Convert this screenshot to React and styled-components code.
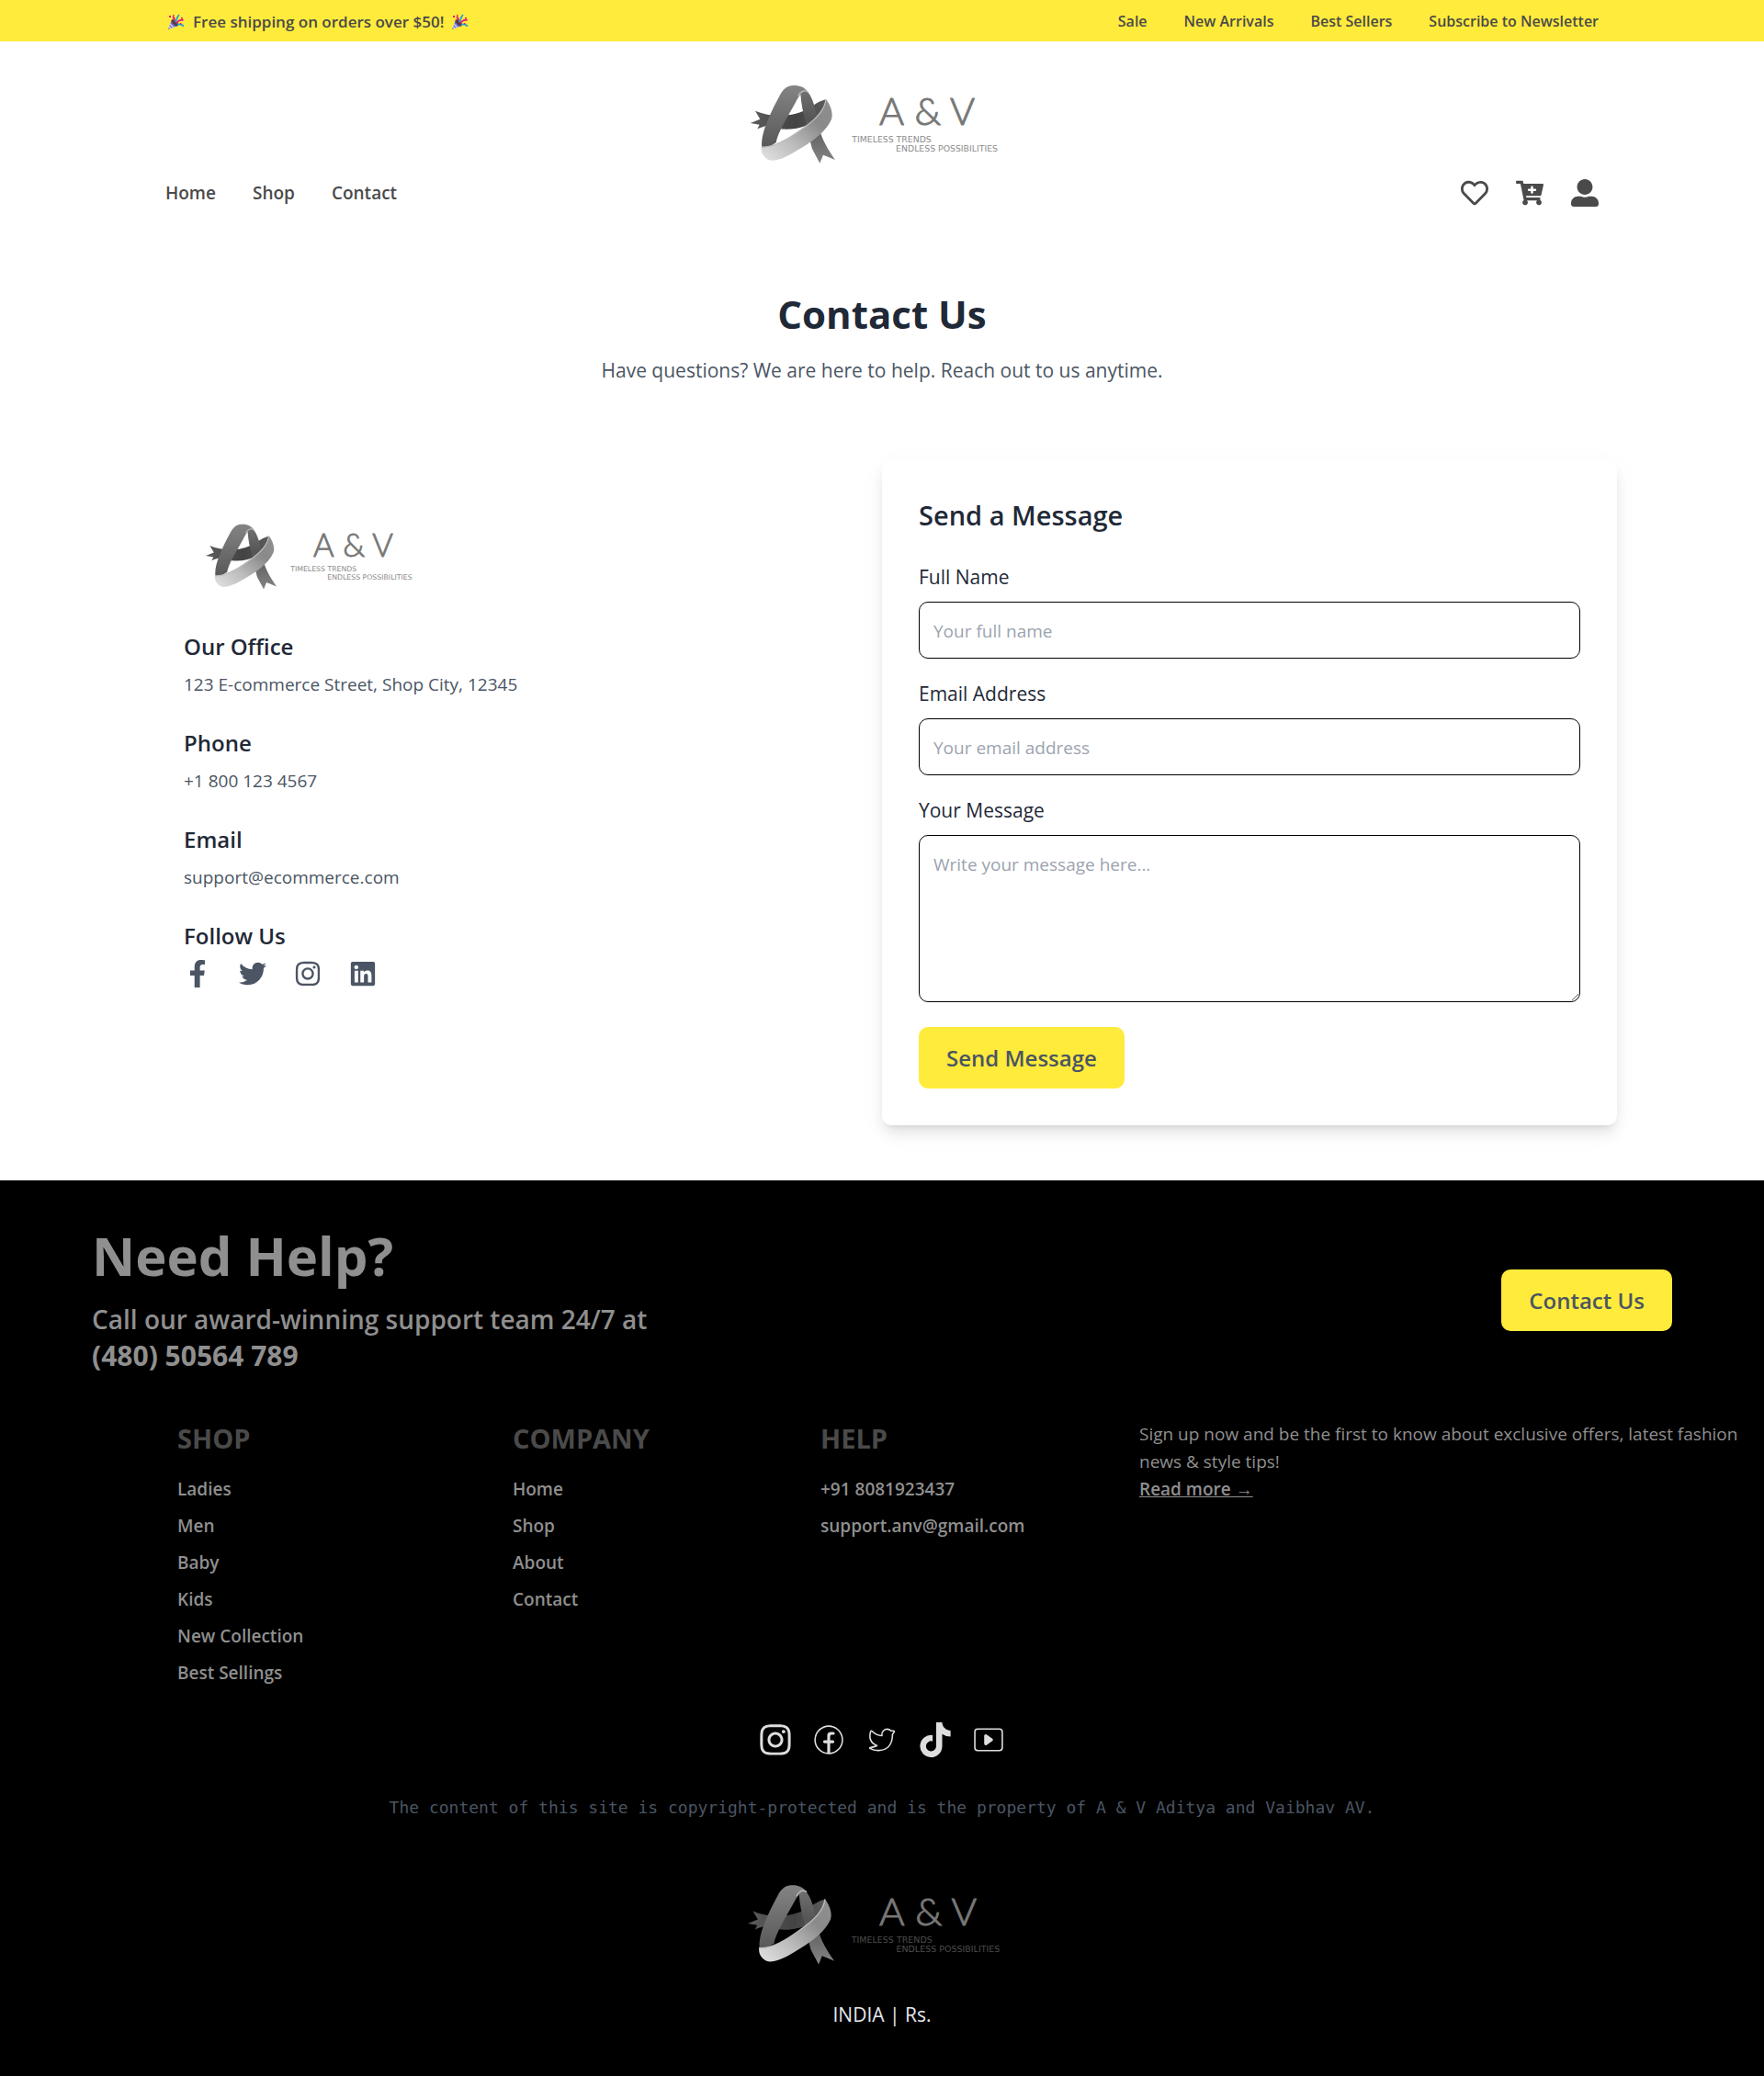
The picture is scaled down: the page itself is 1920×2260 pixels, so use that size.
import React, { useId } from "react";
import styled, { createGlobalStyle } from "styled-components";
import {
  FaRegHeart,
  FaCartPlus,
  FaUserAlt,
  FaFacebookF,
  FaTwitter,
  FaInstagram,
  FaLinkedin,
  FaTiktok,
} from "react-icons/fa";
import { CiFacebook, CiTwitter, CiYoutube } from "react-icons/ci";

const GlobalStyle = createGlobalStyle`
  *, *::before, *::after { box-sizing: border-box; }
  body {
    margin: 0;
    background: #fff;
    color: #1f2937;
    font-family: "Segoe UI", "Open Sans", "Noto Sans", sans-serif;
    font-size: 19px;
    line-height: 30px;
  }
  h1, h2, h3, p, ul { margin: 0; padding: 0; }
  ul { list-style: none; }
  a { color: inherit; text-decoration: none; }
  button, input, textarea { font: inherit; }
  svg { display: block; }
`;

const TopBar = styled.div`
  background: #ffeb3b;
  color: #4a4a4a;
  font-size: 16px;
  font-weight: 600;
  line-height: 25px;
  padding: 11px 180px 9px;
  display: flex;
  justify-content: space-between;
  align-items: center;
`;

const Promo = styled.p`
  display: flex;
  align-items: center;
  gap: 8px;
  padding-left: 2px;
  font-size: 17px;
`;

const LinkRow = styled.nav`
  display: flex;
  align-items: center;
  gap: 40px;
`;

const Header = styled.header`
  padding: 35px 180px 0;
  color: #4a4a4a;
`;

const LogoSlot = styled.div`
  display: flex;
  justify-content: center;
`;

const LogoSvg = styled.svg`
  width: ${(p) => p.$width}px;
  height: auto;
`;

const NavBar = styled.div`
  display: flex;
  justify-content: space-between;
  align-items: center;
  margin-top: 5px;
  font-weight: 600;
`;

const IconRow = styled.div`
  display: flex;
  align-items: center;
  justify-content: ${(p) => (p.$centered ? "center" : "flex-start")};
  gap: ${(p) => p.$gap}px;
  font-size: ${(p) => p.$size}px;
  color: ${(p) => p.$color};
`;

const Intro = styled.section`
  padding: 92px 20px 79px;
  text-align: center;
`;

const PageTitle = styled.h1`
  font-size: 42px;
  font-weight: 700;
  line-height: 50px;
  margin-bottom: 19px;
`;

const Lead = styled.p`
  font-size: 21px;
  line-height: 35px;
  color: #4b5563;
`;

const Columns = styled.main`
  display: grid;
  grid-template-columns: 1fr 1fr;
  max-width: 1600px;
  margin: 0 auto 60px;
`;

const Details = styled.section`
  padding: 60px 40px 40px;
`;

const DetailsLogo = styled.div`
  padding-left: 10px;
  margin-bottom: 34px;
`;

const Detail = styled.div`
  margin-bottom: 31px;
  color: #4b5563;
`;

const DetailTitle = styled.h3`
  font-size: 24px;
  font-weight: 600;
  line-height: 35px;
  margin-bottom: 9px;
  color: #1f2937;
`;

const Card = styled.form`
  padding: 40px;
  border-radius: 10px;
  background: #fff;
  box-shadow: 0 10px 15px -3px rgba(0, 0, 0, 0.1), 0 4px 6px -4px rgba(0, 0, 0, 0.1),
    0 8px 30px rgba(0, 0, 0, 0.04);
`;

const CardTitle = styled.h2`
  font-size: 29px;
  font-weight: 600;
  line-height: 42px;
  margin-bottom: 28px;
`;

const Field = styled.div`
  margin-bottom: 20px;

  &:last-of-type {
    margin-bottom: 27px;
  }
`;

const Label = styled.label`
  display: block;
  font-size: 21px;
  line-height: 37px;
  margin-bottom: 8px;
`;

const Input = styled.input`
  display: block;
  width: 100%;
  height: 62px;
  padding: 16px 15px 14px;
  border: 1px solid #000;
  border-radius: 10px;
  background: #fff;
  color: #1f2937;
  &::placeholder { color: #9ca3af; opacity: 1; }
`;

const TextArea = styled(Input)`
  height: 182px;
`;

const Button = styled.button`
  border: 0;
  border-radius: 10px;
  padding: 16px 30px;
  background: #ffeb3b;
  color: #4b5563;
  font-size: 24px;
  font-weight: 600;
  line-height: 35px;
  cursor: pointer;
`;

const Footer = styled.footer`
  background: #000;
  color: #8f8f8f;
  padding: 50px 0 49px;
`;

const HelpBar = styled.section`
  display: flex;
  justify-content: space-between;
  align-items: center;
  padding: 0 100px;
  font-size: 28px;
  font-weight: 600;
  line-height: 40px;
`;

const HelpTitle = styled.h2`
  font-size: 58px;
  font-weight: 700;
  line-height: 64px;
  margin-bottom: 17px;
`;

const HelpPhone = styled.p`
  font-size: 30px;
  font-weight: 700;
`;

const FooterGrid = styled.div`
  display: grid;
  grid-template-columns: 365fr 335fr 347fr 660fr;
  padding: 50px 20px 39px 193px;
`;

const FooterTitle = styled.h3`
  font-size: 29px;
  font-weight: 700;
  line-height: 40px;
  margin-bottom: 20px;
  color: #4a4a4a;
`;

const FooterList = styled.ul`
  display: grid;
  gap: 10px;
  font-weight: 600;
`;

const ReadMore = styled.a`
  font-weight: 600;
  text-decoration: underline;
`;

const Copyright = styled.p`
  margin: 40px 0 56px;
  text-align: center;
  font-family: Consolas, "DejaVu Sans Mono", monospace;
  font-size: 18px;
  color: #4b5563;
`;

const Locale = styled.p`
  margin-top: 25px;
  text-align: center;
  font-size: 21px;
  line-height: 35px;
  color: #e5e7eb;
`;

function Popper() {
  return (
    <svg width="20" height="18" viewBox="0 0 20 18" role="img" aria-label="party">
      <path d="M1 17 5 6.500 11.500 13Z" fill="#6b6fd6" />
      <path d="M3.200 11.200 6.800 14.900M2 14 4.200 16" stroke="#d6d8ff" strokeWidth="1.300" />
      <ellipse cx="8.300" cy="9.700" rx="4.600" ry="2.300" transform="rotate(45 8.300 9.700)" fill="#5b3a3a" />
      <path d="M7.500 8C8.500 6 7.500 4.500 6 3M10 10.500c1.500-3 5-4.500 7.500-3.500" fill="none" stroke="#e5197d" strokeWidth="1.900" />
      <path d="M8.500 9C11 7 10 4 13 1M11 12c2-1 4-1 7 1.500" fill="none" stroke="#12a5dc" strokeWidth="1.700" />
      <path d="M2 2h2v2H2zM6 1h1.500v1.500H6zM15 4h2v1.500h-2zM14 10h1.500v1.500H14z" fill="#e5197d" />
    </svg>
  );
}

function Logo({ width, letters = "#777", tagline = "#8c8c8c" }) {
  const id = useId().replace(/[^a-zA-Z0-9]/g, "");
  const ref = (name) => `url(#${id}${name})`;
  return (
    <LogoSvg $width={width} viewBox="0 0 960 330" role="img" aria-label="A & V">
      <defs>
        <linearGradient id={`${id}back`} x1="0" x2="1">
          <stop offset="0" stopColor="#5c5c5c" />
          <stop offset="0.6" stopColor="#434343" />
          <stop offset="1" stopColor="#5c5c5c" />
        </linearGradient>
        <linearGradient id={`${id}left`} x1="0" y1="0" x2="0" y2="1">
          <stop offset="0" stopColor="#848484" />
          <stop offset="1" stopColor="#585858" />
        </linearGradient>
        <linearGradient id={`${id}right`} x1="0" y1="0" x2="0" y2="1">
          <stop offset="0" stopColor="#707070" />
          <stop offset="0.4" stopColor="#555" />
          <stop offset="1" stopColor="#858585" />
        </linearGradient>
        <linearGradient id={`${id}front`} x1="0" y1="1" x2="1" y2="0">
          <stop offset="0" stopColor="#e2e2e2" />
          <stop offset="0.35" stopColor="#bdbdbd" />
          <stop offset="0.7" stopColor="#8a8a8a" />
          <stop offset="1" stopColor="#8f8f8f" />
        </linearGradient>
      </defs>
      <path
        d="M66 122C125 147 195 142 245 112C265 98 281 88 297 85C304 110 282 145 250 162C205 187 150 187 108 170C96 172 84 176 73 181L80 167L50 162L82 149Z"
        fill={ref("back")}
      />
      <path
        d="M214 66C216 100 222 128 232 160C240 192 246 226 252 246L277 293L288 266L327 282C303 247 285 218 275 180C266 145 263 90 236 58C228 52 218 56 214 66Z"
        fill={ref("right")}
      />
      <path
        d="M88 242C82 200 112 135 146 72C157 50 172 39 190 39C208 38 226 43 239 61C223 54 210 70 197 96C170 145 140 192 134 226L112 239Z"
        fill={ref("left")}
      />
      <path
        d="M86 240C120 244 173 216 223 178C267 148 294 115 297 84C311 101 322 130 315 149C295 196 237 232 188 260C159 277 126 290 108 281C92 272 84 258 86 240Z"
        fill={ref("front")}
      />
      <path
        d="M86 240C120 244 173 216 223 178C267 148 294 115 297 84M239 61C226 52 214 58 206 74"
        fill="none"
        stroke="#bcbcbc"
        strokeWidth="4"
      />
      <g
        fontFamily="Lato, sans-serif"
        fontSize="124"
        fontWeight="300"
        fill={letters}
        stroke={letters}
        strokeWidth="3"
        strokeLinejoin="round"
        textAnchor="middle"
      >
        <text x="512" y="167">A</text>
        <text x="630" y="167">&amp;</text>
        <text x="743" y="167">V</text>
      </g>
      <g fontFamily="'DejaVu Sans', sans-serif" fontSize="28" fill={tagline}>
        <text x="382" y="224">TIMELESS TRENDS</text>
        <text x="858" y="254" textAnchor="end">ENDLESS POSSIBILITIES</text>
      </g>
    </LogoSvg>
  );
}

const promoLinks = ["Sale", "New Arrivals", "Best Sellers", "Subscribe to Newsletter"];
const navLinks = ["Home", "Shop", "Contact"];
const details = [
  ["Our Office", "123 E-commerce Street, Shop City, 12345"],
  ["Phone", "+1 800 123 4567"],
  ["Email", "support@ecommerce.com"],
];
const footerColumns = [
  ["SHOP", ["Ladies", "Men", "Baby", "Kids", "New Collection", "Best Sellings"]],
  ["COMPANY", ["Home", "Shop", "About", "Contact"]],
  ["HELP", ["+91 8081923437", "support.anv@gmail.com"]],
];
const account = [["Wishlist", FaRegHeart], ["Cart", FaCartPlus], ["Account", FaUserAlt]];
const contactSocials = [
  ["Facebook", FaFacebookF],
  ["Twitter", FaTwitter],
  ["Instagram", FaInstagram],
  ["LinkedIn", FaLinkedin],
];
const footerSocials = [
  ["Instagram", FaInstagram],
  ["Facebook", CiFacebook],
  ["Twitter", CiTwitter],
  ["TikTok", FaTiktok],
  ["YouTube", CiYoutube],
];

function IconLinks({ items, ...rest }) {
  return (
    <IconRow {...rest}>
      {items.map(([label, Icon]) => (
        <a key={label} href="#" aria-label={label}>
          <Icon />
        </a>
      ))}
    </IconRow>
  );
}

export default function App() {
  return (
    <>
      <GlobalStyle />
      <TopBar>
        <Promo>
          <Popper />
          Free shipping on orders over $50!
          <Popper />
        </Promo>
        <LinkRow>
          {promoLinks.map((t) => <a key={t} href="#">{t}</a>)}
        </LinkRow>
      </TopBar>

      <Header>
        <LogoSlot><Logo width={320} /></LogoSlot>
        <NavBar>
          <LinkRow>
            {navLinks.map((t) => <a key={t} href="#">{t}</a>)}
          </LinkRow>
          <IconLinks items={account} $size={30} $gap={30} $color="#4a4a4a" />
        </NavBar>
      </Header>

      <Intro>
        <PageTitle>Contact Us</PageTitle>
        <Lead>Have questions? We are here to help. Reach out to us anytime.</Lead>
      </Intro>

      <Columns>
        <Details>
          <DetailsLogo><Logo width={267} /></DetailsLogo>
          {details.map(([title, value]) => (
            <Detail key={title}>
              <DetailTitle>{title}</DetailTitle>
              <p>{value}</p>
            </Detail>
          ))}
          <DetailTitle>Follow Us</DetailTitle>
          <IconLinks items={contactSocials} $size={30} $gap={30} $color="#4b5563" />
        </Details>

        <Card onSubmit={(e) => e.preventDefault()}>
          <CardTitle>Send a Message</CardTitle>
          <Field>
            <Label htmlFor="name">Full Name</Label>
            <Input id="name" type="text" placeholder="Your full name" />
          </Field>
          <Field>
            <Label htmlFor="email">Email Address</Label>
            <Input id="email" type="email" placeholder="Your email address" />
          </Field>
          <Field>
            <Label htmlFor="message">Your Message</Label>
            <TextArea as="textarea" id="message" placeholder="Write your message here..." />
          </Field>
          <Button type="submit">Send Message</Button>
        </Card>
      </Columns>

      <Footer>
        <HelpBar>
          <div>
            <HelpTitle>Need Help?</HelpTitle>
            <p>Call our award-winning support team 24/7 at</p>
            <HelpPhone>(480) 50564 789</HelpPhone>
          </div>
          <Button type="button">Contact Us</Button>
        </HelpBar>

        <FooterGrid>
          {footerColumns.map(([title, items]) => (
            <div key={title}>
              <FooterTitle>{title}</FooterTitle>
              <FooterList>
                {items.map((t) => <li key={t}><a href="#">{t}</a></li>)}
              </FooterList>
            </div>
          ))}
          <div>
            <p>Sign up now and be the first to know about exclusive offers, latest fashion news &amp; style tips!</p>
            <ReadMore href="#">Read more →</ReadMore>
          </div>
        </FooterGrid>

        <IconLinks items={footerSocials} $size={38} $gap={20} $color="#dedede" $centered />
        <Copyright>The content of this site is copyright-protected and is the property of A &amp; V Aditya and Vaibhav AV.</Copyright>
        <LogoSlot><Logo width={326} tagline="#4c4c4c" /></LogoSlot>
        <Locale>INDIA | Rs.</Locale>
      </Footer>
    </>
  );
}
